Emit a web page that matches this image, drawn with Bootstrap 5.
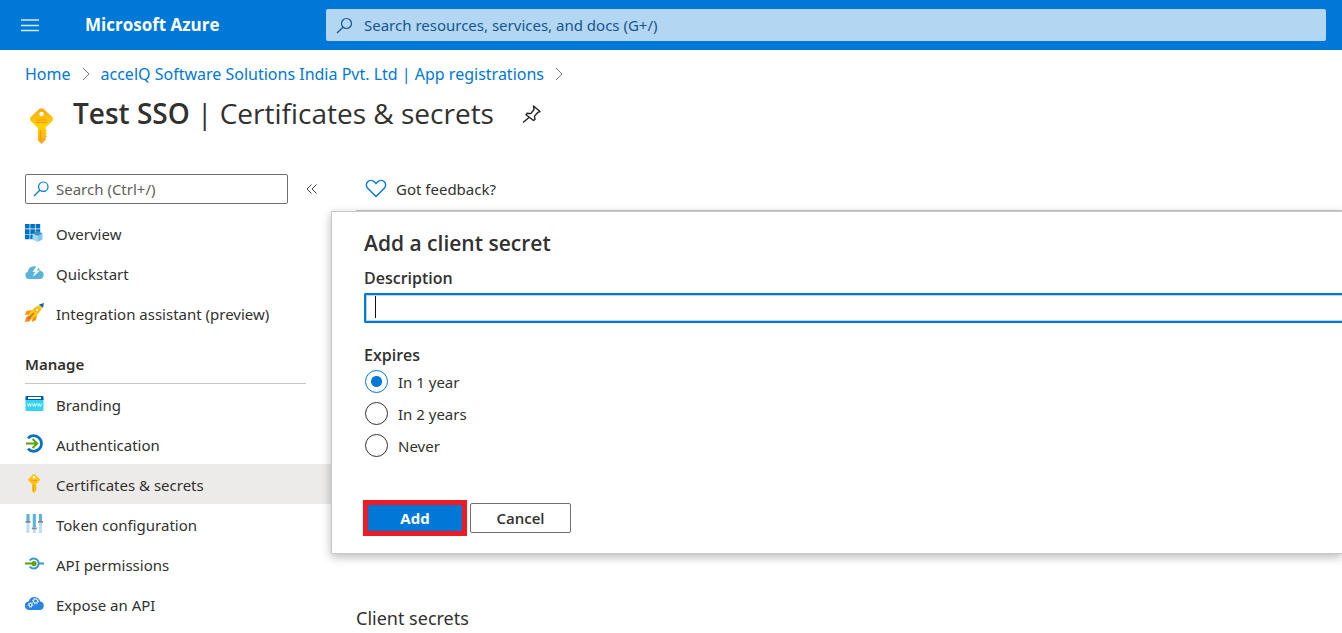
<!DOCTYPE html>
<html lang="en">
<head>
<meta charset="utf-8">
<meta name="viewport" content="width=device-width, initial-scale=1">
<title>Test SSO | Certificates &amp; secrets - Microsoft Azure</title>
<link href="https://cdn.jsdelivr.net/npm/bootstrap@5.3.0/dist/css/bootstrap.min.css" rel="stylesheet">
<style>
  :root { --az-blue: #0078d7; --az-ink: #323130; --az-display: "Open Sans", "Noto Sans", sans-serif; }
  body { font-family: "Noto Sans", "Open Sans", sans-serif; font-size: 15px; line-height: 20px; color: var(--az-ink); overflow-x: hidden; }
  svg { display: block; flex: none; }
  .topbar { background: var(--az-blue); height: 50px; padding: 0 16px 0 20px; }
  .brand-area { width: 306px; gap: 45px; }
  .brand-name { font-family: var(--az-display); font-size: 17px; font-weight: 700; color: #fff; text-decoration: none; }
  .global-search { background: #b3d6f2; height: 32px; border-radius: 2px; padding: 0 10px; gap: 11px; color: #14568f; }
  .global-search input, .menu-search input { border: 0; background: none; outline: 0; padding: 0; min-width: 0; flex: 1; color: inherit; }
  .global-search input::placeholder { color: #14568f; opacity: 1; }
  .crumbs { padding: 12px 25px 0; gap: 11px; font-size: 16px; line-height: 24px; }
  .crumbs a { color: var(--az-blue); text-decoration: none; }
  .page-head { padding: 6px 25px 0 29px; height: 78px; gap: 19px; }
  .page-head h1 { font-family: var(--az-display); font-size: 28px; line-height: 42px; font-weight: 400; margin: 0; }
  .page-head h1 strong { font-weight: 600; }
  .pin-btn { margin: 12px 0 0 8px; }
  .side { width: 331px; flex: none; padding-top: 10px; }
  .menu-tools { padding: 0 12px 0 25px; margin-bottom: 9px; gap: 16px; }
  .menu-search { width: 263px; height: 30px; border: 1px solid #6e6e6e; border-radius: 2px; padding: 0 7px; gap: 7px; }
  .menu-search input::placeholder { color: #605e5c; opacity: 1; }
  .plain-btn { border: 0; background: none; padding: 0; color: inherit; }
  .menu-link { height: 40px; padding: 2px 25px 0; gap: 12px; color: var(--az-ink); text-decoration: none; }
  .menu-link svg { margin-bottom: 4px; }
  .menu-link.active { background: #edebe9; }
  .menu-title { font-size: 15px; font-weight: 600; line-height: 20px; margin: 0 25px; padding: 21px 0 9px; border-bottom: 1px solid #c8c6c4; }
  .toolbar { height: 47px; margin-left: 25px; padding: 4px 9px 0; border-bottom: 1px solid #c8c8c8; }
  .toolbar button { gap: 9px; }
  .secret-panel { position: relative; background: #fff; border: 1px solid #c8c8c8; border-right: 0; box-shadow: 0 3px 9px rgba(0,0,0,.28); padding: 16px 0 17px 32px; }
  .secret-panel h2 { font-family: var(--az-display); font-size: 21px; line-height: 30px; font-weight: 600; margin: 0 0 9px; }
  .field-label { font-family: var(--az-display); font-size: 16px; line-height: 22px; font-weight: 600; margin: 0 0 4px; display: block; float: none; }
  .desc-input { width: 100%; height: 30px; border: 2px solid var(--az-blue); border-right: 0; border-radius: 2px 0 0 2px; outline: 0; padding: 0 8px;
    box-shadow: inset 0 1px #b3d6f2, inset 0 -1px #b3d6f2, inset 1px 0 #b3d6f2; background: linear-gradient(#111, #111) 9px 1px / 1px 22px no-repeat; }
  .expiry { margin-top: 24px; }
  .expiry legend { line-height: 16px; margin-bottom: 3px; }
  .choice { height: 32px; gap: 10px; padding-left: 1px; }
  .choice input { appearance: none; width: 23px; height: 23px; border: 1px solid var(--az-ink); border-radius: 50%; margin: 0 0 2px; }
  .choice input:checked { border-color: var(--az-blue); background: radial-gradient(circle, var(--az-blue) 5px, transparent 6px); }
  .actions { gap: 3px; margin: 38px 0 0 -1px; }
  .actions button { font-family: var(--az-display); font-weight: 600; font-size: 15px; line-height: 20px; border-radius: 0; padding: 0; }
  .actions .add-btn { width: 104px; height: 36px; background: var(--az-blue); color: #fff; font-weight: 700; border: 5px solid #ed1c24; }
  .actions .cancel-btn { width: 101px; height: 30px; background: #fff; border: 1px solid #6e6e6e; border-radius: 2px; color: var(--az-ink); }
  .list-title { font-size: 18px; line-height: 26px; font-weight: 400; margin: 51px 25px 0; }
</style>
</head>
<body>
<header class="topbar d-flex align-items-center">
  <div class="brand-area d-flex align-items-center flex-shrink-0">
    <button class="plain-btn" type="button" aria-label="Menu">
      <svg width="20" height="14" viewBox="0 0 20 14" stroke="#d6eafa" stroke-width="1.300"><path d="M1 2h18M1 7.500h18M1 12.500h18"/></svg>
    </button>
    <a class="brand-name" href="#">Microsoft Azure</a>
  </div>
  <label class="global-search d-flex align-items-center flex-fill">
    <svg width="17" height="17" viewBox="0 0 17 17" fill="none" stroke="#14568f" stroke-width="1.2"><circle cx="10.500" cy="6.500" r="5"/><path d="M7 10.200L1 16"/></svg>
    <input type="search" aria-label="Search resources" placeholder="Search resources, services, and docs (G+/)">
  </label>
</header>

<nav class="crumbs d-flex align-items-center" aria-label="Breadcrumb">
  <a href="#">Home</a>
  <svg width="8" height="14" viewBox="0 0 8 14" fill="none" stroke="#777"><path d="M1 1l6 6-6 6"/></svg>
  <a href="#">accelQ Software Solutions India Pvt. Ltd | App registrations</a>
  <svg width="8" height="14" viewBox="0 0 8 14" fill="none" stroke="#777"><path d="M1 1l6 6-6 6"/></svg>
</nav>

<div class="page-head d-flex align-items-start">
  <svg class="mt-3" width="25" height="36" viewBox="0 0 25 36">
    <defs><linearGradient id="gold" x2="0" y2="1"><stop stop-color="#fea613"/><stop offset=".5" stop-color="#ffd400"/><stop offset="1" stop-color="#fea11b"/></linearGradient></defs>
    <path fill="url(#gold)" d="M10.500.8Q12.500-.4 14.500.8L23.300 9Q24.800 11 23.300 13L16.500 19.500V21l1.500 1.500L16.500 24l1.500 1.500-1.500 1.500 1.500 1.500-1.500 1.500v2L12.500 36 9 32.500V20L1.700 13Q.2 11 1.700 9z"/>
    <circle cx="12.500" cy="6" r="2.300" fill="#fff"/><path d="M7 12h11M7 14.500h11M11.500 22v11" stroke="#f79a0c" stroke-width="1.200"/>
  </svg>
  <h1><strong>Test SSO</strong> | Certificates &amp; secrets</h1>
  <button class="plain-btn pin-btn" type="button" aria-label="Pin">
    <svg width="22" height="20" viewBox="0 0 22 20" fill="none" stroke="#222" stroke-width="1.400" stroke-linejoin="round"><path d="M12.500 2l6.500 5.500-2 .8-3.500 3.800.5 3.400-1.500 1L5 10.800l1-1.500 3.800.3L13 5.500zM8 13.500L2 18.500"/></svg>
  </button>
</div>

<div class="d-flex">
  <aside class="side">
    <div class="menu-tools d-flex align-items-center">
      <label class="menu-search d-flex align-items-center">
        <svg width="16" height="16" viewBox="0 0 16 16" fill="none" stroke="#0078d7" stroke-width="1.200"><circle cx="10.300" cy="5.700" r="4.700"/><path d="M7 9L1 15"/></svg>
        <input type="search" aria-label="Search menu" placeholder="Search (Ctrl+/)">
      </label>
      <button class="plain-btn ms-auto me-auto" type="button" aria-label="Collapse menu">
        <svg width="12" height="12" viewBox="0 0 12 12" fill="none" stroke="#444"><path d="M5.500 1.500L1 6l4.500 4.500M10.500 1.500L6 6l4.500 4.500"/></svg>
      </button>
    </div>
    <nav aria-label="Resource menu">
      <a class="menu-link d-flex align-items-center" href="#">
        <svg width="19" height="19" viewBox="0 0 19 19"><path fill="#0072c6" d="M0 1h4.600v4.600H0zM5.300 1h4.600v4.600H5.300zM10.600 1h4.600v4.600h-4.600zM0 6.300h4.600v4.600H0zM5.300 6.300h4.600v4.600H5.300zM10.600 6.300h4.600v4.600h-4.600zM0 11.600h4.600v4.600H0zM5.300 11.600h4.600v4.600H5.300z"/><path fill="#a0d8ef" d="M7.500 10.500l5 1.500v7l-5-2.500z"/><path fill="#7fc8e8" d="M12.500 12l5-1.500v6l-5 2.500z"/><path fill="#3a95c8" d="M12.500 7.800l5 2.700-5 2.200-5-2.200z"/></svg>
        Overview</a>
      <a class="menu-link d-flex align-items-center" href="#">
        <svg width="19" height="19" viewBox="0 0 19 19"><path fill="#59b4d9" d="M4 16a3.800 3.800 0 0 1-1-7.400A5.500 5.500 0 0 1 8 3.500a6 6 0 0 1 7.200 4.200A4.200 4.200 0 0 1 15 16z"/><path fill="#fff" d="M12 2.500L7.500 9H10l-2.200 5L15 7.500h-3l2.500-5z"/></svg>
        Quickstart</a>
      <a class="menu-link d-flex align-items-center" href="#">
        <svg width="19" height="19" viewBox="0 0 19 19"><path fill="#ff9300" d="M7 7L1.500 8 0 12l4-.5zM12 12l-1 5-4 2 .5-5z"/><path fill="#f78d1e" d="M4 12l3 3-2.500 3.500L0 19l1-4.500z"/><path fill="#ffca00" d="M4 12Q8 3.500 15 2l2 2Q15.500 11 7 15.500z"/><path fill="#0065b3" d="M19 0l-1 5-4-3.500z"/><circle cx="12" cy="7" r="1.800" fill="#fff" stroke="#e67a00" stroke-width=".6"/><path d="M9 10l-6 6" stroke="#e65b00" stroke-width="1.200"/></svg>
        Integration assistant (preview)</a>
      <h2 class="menu-title">Manage</h2>
      <a class="menu-link d-flex align-items-center" href="#">
        <svg width="19" height="19" viewBox="0 0 19 19"><path fill="#32d4f5" d="M.5 5h18v11q0 1-1 1h-16q-1 0-1-1z"/><path fill="#0058ad" d="M1.500 2h16q1 0 1 1v3H.5V3q0-1 1-1z"/><path fill="#fff" d="M3 3h13v2H3z"/><path fill="none" stroke="#fff" stroke-width=".8" d="M2.500 9.500l1 3 1-3 1 3 1-3M7.500 9.500l1 3 1-3 1 3 1-3M12.500 9.500l1 3 1-3 1 3 1-3"/></svg>
        Branding</a>
      <a class="menu-link d-flex align-items-center" href="#">
        <svg width="19" height="19" viewBox="0 0 19 19" fill="none"><path stroke="#0072c6" stroke-width="2.800" d="M3 4.200A7.800 7.800 0 1 1 3 14.800"/><path stroke="#57a300" stroke-width="1.900" d="M1 9.500h11M7.500 5l4.700 4.500L7.500 14"/></svg>
        Authentication</a>
      <a class="menu-link active d-flex align-items-center" href="#" aria-current="page">
        <svg width="19" height="19" viewBox="0 0 19 19"><path fill="#ffc20e" d="M8 .5q1-.8 2 0l4.500 4.200q.9 1 0 2.100L11 10v1l.8.8-.8.800.8.8-.8.800.8.8-.8 1v1L9 19l-2-1.700V10L3.500 6.800q-.9-1.100 0-2.100z"/><circle cx="9" cy="3.200" r="1.200" fill="#fff"/><path d="M6 6.500h6M8.500 11v6" stroke="#f49b1a"/></svg>
        Certificates &amp; secrets</a>
      <a class="menu-link d-flex align-items-center" href="#">
        <svg width="19" height="19" viewBox="0 0 19 19"><path fill="#b9dff0" d="M1.500 0h3v19h-3zM7.800 0h3v19h-3zM14 0h3v19h-3z"/><path fill="#59b4d9" d="M1.500 0h3v7h-3zM7.800 0h3v13h-3zM14 0h3v7h-3z"/><path fill="#888" d="M.5 7h5v1.700h-5zM6.800 13.500h5v1.700h-5zM13 7h5v1.700h-5z"/></svg>
        Token configuration</a>
      <a class="menu-link d-flex align-items-center" href="#">
        <svg width="19" height="19" viewBox="0 0 19 19" fill="none"><path stroke="#3999c6" stroke-width="2" d="M4.700 6.500a5 5 0 1 1 0 6M14 9.500h5"/><path stroke="#57a300" stroke-width="2" d="M0 9.500h8"/><circle cx="9" cy="9.500" r="2.600" fill="#57a300"/></svg>
        API permissions</a>
      <a class="menu-link d-flex align-items-center" href="#">
        <svg width="19" height="19" viewBox="0 0 19 19"><path fill="#2b83e0" d="M4.500 16A4.300 4.300 0 0 1 3.800 7.300 6 6 0 0 1 15.300 7.500 4.300 4.300 0 0 1 14.800 16z"/><g fill="none" stroke="#fff"><circle cx="10.500" cy="7" r="2"/><circle cx="10.500" cy="7" r="3" stroke-dasharray="1.200 1.150"/><circle cx="5.500" cy="11" r="1.500"/><circle cx="5.500" cy="11" r="2.300" stroke-dasharray="1 .8"/></g></svg>
        Expose an API</a>
    </nav>
  </aside>

  <main class="flex-fill">
    <div class="toolbar d-flex align-items-center">
      <button class="plain-btn d-flex align-items-center" type="button">
        <svg width="22" height="20" viewBox="0 0 22 20" fill="none" stroke="#0078d7" stroke-width="1.400"><path d="M11 17.500L2.700 9.200a4.500 4.500 0 0 1 0-6.400 4.700 4.700 0 0 1 6.600 0L11 4.500l1.700-1.700a4.700 4.700 0 0 1 6.600 0 4.500 4.500 0 0 1 0 6.400z"/></svg>
        Got feedback?
      </button>
    </div>
    <form class="secret-panel">
      <h2>Add a client secret</h2>
      <label class="field-label" for="desc">Description</label>
      <input class="desc-input d-block" id="desc" type="text">
      <fieldset class="expiry">
        <legend class="field-label">Expires</legend>
        <div class="choice d-flex align-items-center"><input type="radio" name="expires" id="e1" checked><label for="e1">In 1 year</label></div>
        <div class="choice d-flex align-items-center"><input type="radio" name="expires" id="e2"><label for="e2">In 2 years</label></div>
        <div class="choice d-flex align-items-center"><input type="radio" name="expires" id="e3"><label for="e3">Never</label></div>
      </fieldset>
      <div class="actions d-flex align-items-center">
        <button class="add-btn" type="button">Add</button>
        <button class="cancel-btn" type="button">Cancel</button>
      </div>
    </form>
    <h2 class="list-title">Client secrets</h2>
  </main>
</div>
<script src="https://cdn.jsdelivr.net/npm/bootstrap@5.3.0/dist/js/bootstrap.bundle.min.js"></script>
</body>
</html>
